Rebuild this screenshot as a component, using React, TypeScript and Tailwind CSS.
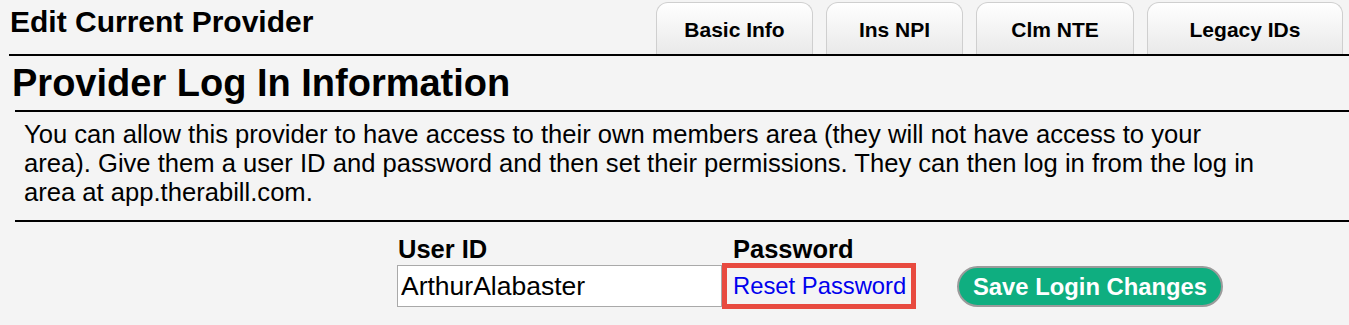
import React from "react";

const tabs = [
  { label: "Basic Info", w: "w-[157px]" },
  { label: "Ins NPI", w: "w-[137px]" },
  { label: "Clm NTE", w: "w-[158px]" },
  { label: "Legacy IDs", w: "w-[196px]" },
];

export default function App() {
  return (
    <div className="bg-[#f4f4f4] w-full h-[325px] overflow-hidden text-black font-['Liberation_Sans',Arial,sans-serif]">
      {/* top header with tabs */}
      <div className="flex justify-between items-end h-[54px] pl-[10px] pr-[6px]">
        <h2 className="self-start pt-[5px] text-[30px] font-bold leading-[34px]">Edit Current Provider</h2>
        <div className="flex gap-[13px] items-end">
          {tabs.map((t) => (
            <button
              key={t.label}
              className={`${t.w} h-[52px] rounded-t-[12px] border border-b-0 border-[#cfcfcf] bg-gradient-to-b from-white to-[#e9e9e9] text-[21px] font-bold pt-[2px]`}
            >
              {t.label}
            </button>
          ))}
        </div>
      </div>
      <div className="ml-[9px] h-[2px] bg-black" />

      <div className="ml-[15px]">
        <h1 className="-ml-[3px] text-[38px] font-bold leading-[54px]">Provider Log In Information</h1>
        <div className="h-[2px] bg-black" />
        <p className="pl-[9px] pt-[8px] pb-[13px] text-[25.6px] leading-[29px] pr-[40px]">
          You can allow this provider to have access to their own members area (they will not have access to your
          <br />
          area). Give them a user ID and password and then set their permissions. They can then log in from the log in
          <br />
          area at app.therabill.com.
        </p>
        <div className="h-[2px] bg-black" />
      </div>

      {/* login form */}
      <div className="flex items-start pl-[397px] pt-[14px]">
        <div className="flex flex-col">
          <span className="text-[25.5px] font-bold leading-[27px] pl-[1px]">User ID</span>
          <input
            defaultValue="ArthurAlabaster"
            className="mt-[2px] w-[325px] h-[42px] border border-[#a9a9a9] bg-white px-[3px] text-[26.5px] outline-none font-['Liberation_Sans',Arial,sans-serif]"
          />
        </div>
        <div className="flex flex-col">
          <span className="text-[25.5px] font-bold leading-[27px] pl-[11px]">Password</span>
          <div className="w-[194px] h-[46px] border-[5px] border-[#e84a3f] pl-[6px] flex items-center">
            <a href="#" className="text-[#0000ee] text-[23.8px] leading-none whitespace-nowrap">Reset Password</a>
          </div>
        </div>
        <button className="ml-[41px] mt-[30px] h-[41px] px-[14px] rounded-full border-2 border-[#9b9b9b] bg-[#0fae80] text-white text-[23.8px] font-bold">
          Save Login Changes
        </button>
      </div>
    </div>
  );
}
